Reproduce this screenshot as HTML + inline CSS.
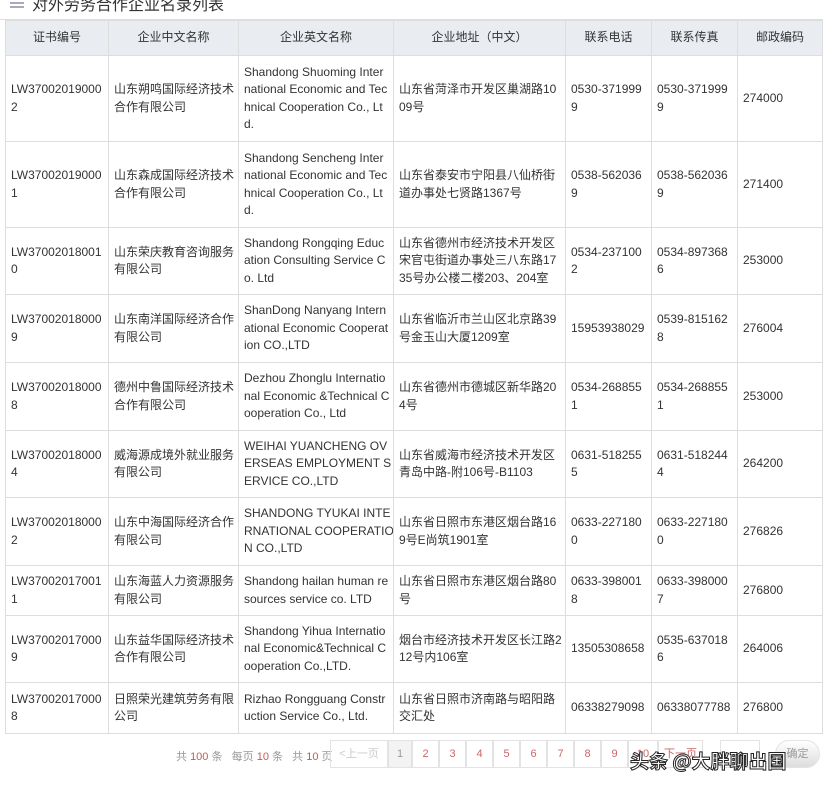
<!DOCTYPE html>
<html><head><meta charset="utf-8"><style>
html,body{margin:0;padding:0;background:#fff;width:823px;height:789px;overflow:hidden;position:relative;font-family:"Liberation Sans","Noto Sans CJK SC",sans-serif;color:#333;}
.title{position:absolute;left:10px;top:-9px;font-size:16px;color:#333;white-space:nowrap}
.title i{display:inline-block;width:14px;height:10px;margin-right:8px;vertical-align:2px;background:linear-gradient(#aab 0 2px,transparent 2px 4px,#aab 4px 6px,transparent 6px 8px,#aab 8px 10px)}
.topline{position:absolute;left:0;top:19px;width:823px;height:1px;background:#ddd}
table{position:absolute;left:5px;top:20px;width:817px;border-collapse:collapse;table-layout:fixed;font-size:12px;line-height:17.5px}
td,th{border:1px solid #ddd;padding:0 5px;vertical-align:middle;text-align:left;overflow:hidden;white-space:nowrap}
th{background:#e9edf2;height:34px;font-weight:normal;text-align:center;color:#333}
.pg{position:absolute;top:740px;font-size:11px;color:#999;white-space:nowrap}
.pg b{font-weight:normal;color:#c55}
.box{position:absolute;top:740px;height:28px;border:1px solid #e3e3e3;box-sizing:border-box;font-size:11px;color:#c66;text-align:center;line-height:26px}
.wm{position:absolute;left:630px;top:747px;font-size:19px;color:#fff;-webkit-text-stroke:1px #222;font-weight:bold;white-space:nowrap;font-family:"Noto Sans CJK SC",sans-serif}
</style></head><body>
<div class="title"><i></i>对外劳务合作企业名录列表</div>
<div class="topline"></div>
<table>
<colgroup><col style="width:103px"><col style="width:130px"><col style="width:155px"><col style="width:172px"><col style="width:86px"><col style="width:86px"><col style="width:85px"></colgroup>
<tr><th>证书编号</th><th>企业中文名称</th><th>企业英文名称</th><th>企业地址（中文）</th><th>联系电话</th><th>联系传真</th><th>邮政编码</th></tr>
<tr style="height:86px"><td>LW37002019000<br>2</td><td>山东朔鸣国际经济技术<br>合作有限公司</td><td>Shandong Shuoming Inter<br>national Economic and Tec<br>hnical Cooperation Co., Lt<br>d.</td><td>山东省菏泽市开发区巢湖路10<br>09号</td><td>0530-371999<br>9</td><td>0530-371999<br>9</td><td>274000</td></tr>
<tr style="height:86px"><td>LW37002019000<br>1</td><td>山东森成国际经济技术<br>合作有限公司</td><td>Shandong Sencheng Inter<br>national Economic and Tec<br>hnical Cooperation Co., Lt<br>d.</td><td>山东省泰安市宁阳县八仙桥街<br>道办事处七贤路1367号</td><td>0538-562036<br>9</td><td>0538-562036<br>9</td><td>271400</td></tr>
<tr style="height:67px"><td>LW37002018001<br>0</td><td>山东荣庆教育咨询服务<br>有限公司</td><td>Shandong Rongqing Educ<br>ation Consulting Service C<br>o. Ltd</td><td>山东省德州市经济技术开发区<br>宋官屯街道办事处三八东路17<br>35号办公楼二楼203、204室</td><td>0534-237100<br>2</td><td>0534-897368<br>6</td><td>253000</td></tr>
<tr style="height:68px"><td>LW37002018000<br>9</td><td>山东南洋国际经济合作<br>有限公司</td><td>ShanDong Nanyang Intern<br>ational Economic Cooperat<br>ion CO.,LTD</td><td>山东省临沂市兰山区北京路39<br>号金玉山大厦1209室</td><td>15953938029</td><td>0539-815162<br>8</td><td>276004</td></tr>
<tr style="height:68px"><td>LW37002018000<br>8</td><td>德州中鲁国际经济技术<br>合作有限公司</td><td>Dezhou Zhonglu Internatio<br>nal Economic &amp;Technical C<br>ooperation Co., Ltd</td><td>山东省德州市德城区新华路20<br>4号</td><td>0534-268855<br>1</td><td>0534-268855<br>1</td><td>253000</td></tr>
<tr style="height:67px"><td>LW37002018000<br>4</td><td>威海源成境外就业服务<br>有限公司</td><td>WEIHAI YUANCHENG OV<br>ERSEAS EMPLOYMENT S<br>ERVICE CO.,LTD</td><td>山东省威海市经济技术开发区<br>青岛中路-附106号-B1103</td><td>0631-518255<br>5</td><td>0631-518244<br>4</td><td>264200</td></tr>
<tr style="height:68px"><td>LW37002018000<br>2</td><td>山东中海国际经济合作<br>有限公司</td><td>SHANDONG TYUKAI INTE<br>RNATIONAL COOPERATIO<br>N CO.,LTD</td><td>山东省日照市东港区烟台路16<br>9号E尚筑1901室</td><td>0633-227180<br>0</td><td>0633-227180<br>0</td><td>276826</td></tr>
<tr style="height:50px"><td>LW37002017001<br>1</td><td>山东海蓝人力资源服务<br>有限公司</td><td>Shandong hailan human re<br>sources service co. LTD</td><td>山东省日照市东港区烟台路80<br>号</td><td>0633-398001<br>8</td><td>0633-398000<br>7</td><td>276800</td></tr>
<tr style="height:67px"><td>LW37002017000<br>9</td><td>山东益华国际经济技术<br>合作有限公司</td><td>Shandong Yihua Internatio<br>nal Economic&amp;Technical C<br>ooperation Co.,LTD.</td><td>烟台市经济技术开发区长江路2<br>12号内106室</td><td>13505308658</td><td>0535-637018<br>6</td><td>264006</td></tr>
<tr style="height:51px"><td>LW37002017000<br>8</td><td>日照荣光建筑劳务有限<br>公司</td><td>Rizhao Rongguang Constr<br>uction Service Co., Ltd.</td><td>山东省日照市济南路与昭阳路<br>交汇处</td><td>06338279098</td><td>06338077788</td><td>276800</td></tr>
</table>
<div class="pg" style="left:176px;top:748px">共 <b>100</b> 条 &nbsp; 每页 <b>10</b> 条 &nbsp; 共 <b>10</b> 页</div>
<div class="box" style="left:330px;width:58px;color:#ccc">&lt;上一页</div>
<div class="box" style="left:388px;width:24px;background:#f3f3f3;color:#999">1</div>
<div class="box" style="left:412px;width:27px">2</div>
<div class="box" style="left:439px;width:27px">3</div>
<div class="box" style="left:466px;width:27px">4</div>
<div class="box" style="left:493px;width:27px">5</div>
<div class="box" style="left:520px;width:27px">6</div>
<div class="box" style="left:547px;width:27px">7</div>
<div class="box" style="left:574px;width:27px">8</div>
<div class="box" style="left:601px;width:27px">9</div>
<div class="box" style="left:628px;width:30px">10</div>
<div class="box" style="left:658px;width:45px">下一页</div>
<div class="box" style="left:720px;width:40px;color:#999"></div>
<div class="box" style="left:775px;width:45px;border-radius:14px;background:linear-gradient(#fff,#ddd);color:#999">确定</div>
<div class="wm">头条 @大胖聊出国</div>
</body></html>
